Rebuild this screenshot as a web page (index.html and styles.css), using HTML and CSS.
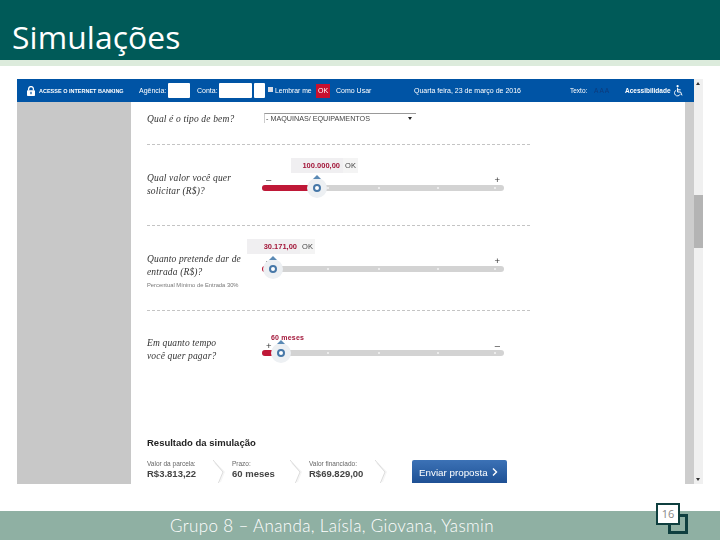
FILE: index.html
```html
<!DOCTYPE html>
<html lang="pt">
<head>
<meta charset="utf-8">
<title>Simulações</title>
<link rel="stylesheet" href="styles.css">
</head>
<body>
<div class="slide">
  <header class="title-bar"><h1>Simulações</h1></header>
  <div class="strip"></div>
  <main class="stage">
    <div class="shot">
      <nav class="nav">
        <svg class="lock" width="8" height="10" viewBox="0 0 8 10"><path d="M1.6 4.5V3a2.4 2.4 0 0 1 4.8 0v1.5" fill="none" stroke="#fff" stroke-width="1.3"/><rect y="4.2" width="8" height="5.8" rx=".8" fill="#fff"/><rect x="3.4" y="5.8" width="1.2" height="2.4" fill="#0054a5"/></svg>
        <span class="nav-access">ACESSE O INTERNET BANKING</span>
        <span class="nav-agencia">Agência:</span>
        <span class="field f-ag"></span>
        <span class="nav-conta">Conta:</span>
        <span class="field f-co"></span>
        <span class="field f-di"></span>
        <span class="check"></span>
        <span class="nav-lembrar">Lembrar me</span>
        <span class="ok-btn">OK</span>
        <span class="nav-como">Como Usar</span>
        <span class="nav-date">Quarta feira, 23 de março de 2016</span>
        <span class="nav-texto">Texto:</span>
        <span class="nav-aaa">A A A</span>
        <span class="nav-acess">Acessibilidade</span>
        <svg class="wheel" width="9" height="12" viewBox="0 0 9 12"><circle cx="3.6" cy="1.2" r="1.1" fill="#fff"/><path d="M3.6 2.8V7h3l1.4 3.4M3.6 4.8h3" fill="none" stroke="#fff" stroke-width="1"/><path d="M2.2 5.2a3 3 0 1 0 4 4" fill="none" stroke="#fff" stroke-width=".9"/></svg>
      </nav>
      <div class="shot-body">
        <aside class="side"></aside>
        <section class="content">
          <div class="row row-type">
            <p class="q q-type">Qual é o tipo de bem?</p>
            <div class="select"><span>- MAQUINAS/ EQUIPAMENTOS</span><i class="caret"></i></div>
          </div>
          <div class="row row-value">
            <p class="q">Qual valor você quer<br>solicitar (R$)?</p>
            <div class="control">
              <div class="amount a-value"><span class="amount-box box-value">100.000,00</span><span class="amount-ok">OK</span></div>
              <div class="signs"><span>–</span><span>+</span></div>
              <div class="track">
                <i class="fill fill-value"></i>
                <i class="tick t1"></i><i class="tick t2"></i><i class="tick t3"></i><i class="tick t4"></i>
                <span class="handle h-value"></span>
              </div>
            </div>
          </div>
          <div class="row row-entry">
            <div>
              <p class="q">Quanto pretende dar de<br>entrada (R$)?</p>
              <p class="note">Percentual Mínimo de Entrada 30%</p>
            </div>
            <div class="control">
              <div class="amount a-entry"><span class="amount-box box-entry">30.171,00</span><span class="amount-ok">OK</span></div>
              <div class="signs"><span>–</span><span>+</span></div>
              <div class="track">
                <i class="fill fill-entry"></i>
                <i class="tick t1"></i><i class="tick t2"></i><i class="tick t3"></i><i class="tick t4"></i>
                <span class="handle h-entry"></span>
              </div>
            </div>
          </div>
          <div class="row row-time">
            <p class="q">Em quanto tempo<br>você quer pagar?</p>
            <div class="control">
              <div class="months">60 meses</div>
              <div class="signs signs-time"><span>+</span><span>–</span></div>
              <div class="track">
                <i class="fill fill-time"></i>
                <i class="tick t1"></i><i class="tick t2"></i><i class="tick t3"></i><i class="tick t4"></i>
                <span class="handle h-time"></span>
              </div>
            </div>
          </div>
          <div class="result">
            <h2>Resultado da simulação</h2>
            <div class="result-row">
              <div class="stat s1"><small>Valor da parcela:</small><b>R$3.813,22</b></div>
              <svg class="chev" width="18" height="24" viewBox="0 0 18 24"><path d="M2 3l9 9-4 10" fill="none" stroke="#f6f6f6" stroke-width="2"/><path d="M0 0l10 12-5 12" fill="none" stroke="#dcdcdc"/></svg>
              <div class="stat s2"><small>Prazo:</small><b>60 meses</b></div>
              <svg class="chev" width="18" height="24" viewBox="0 0 18 24"><path d="M2 3l9 9-4 10" fill="none" stroke="#f6f6f6" stroke-width="2"/><path d="M0 0l10 12-5 12" fill="none" stroke="#dcdcdc"/></svg>
              <div class="stat s3"><small>Valor financiado:</small><b>R$69.829,00</b></div>
              <svg class="chev" width="18" height="24" viewBox="0 0 18 24"><path d="M2 3l9 9-4 10" fill="none" stroke="#f6f6f6" stroke-width="2"/><path d="M0 0l10 12-5 12" fill="none" stroke="#dcdcdc"/></svg>
              <div class="send">Enviar proposta<svg width="6" height="8" viewBox="0 0 6 8"><path d="M1 .5 4.5 4 1 7.5" fill="none" stroke="#fff" stroke-width="1.4"/></svg></div>
            </div>
          </div>
        </section>
        <div class="gutter"></div>
      </div>
    </div>
    <div class="scrollbar">
      <i class="arrow-up"></i>
      <i class="thumb"></i>
      <i class="arrow-down"></i>
    </div>
  </main>
  <footer class="footer">
    <span class="names">Grupo 8 – Ananda, Laísla, Giovana, Yasmin</span>
    <span class="page-back"></span>
    <span class="page-num">16</span>
  </footer>
</div>
</body>
</html>
```
FILE: styles.css
```css
*, *::before, *::after { box-sizing: border-box; }
html, body { margin: 0; padding: 0; background: #fff; }
p, h1, h2 { margin: 0; font-weight: normal; }
i { display: block; font-style: normal; }

.slide { width: 720px; height: 540px; display: flex; flex-direction: column; overflow: hidden; font-family: "Liberation Sans", Arial, sans-serif; }

.title-bar { height: 60px; background: #005a58; padding: 15px 0 0 12px; flex: none; }
.title-bar h1 { font: 31.8px/44px "Open Sans", sans-serif; color: #fff; letter-spacing: .1px; height: 45px; }
.strip { height: 6px; background: #dcebdc; flex: none; }

.stage { height: 405px; margin-top: 13px; padding-left: 17px; display: flex; flex: none; }
.shot { width: 677px; height: 405px; display: flex; flex-direction: column; overflow: hidden; filter: blur(.35px); }

.nav { height: 23px; flex: none; background: #0054a5; color: #fff; display: flex; align-items: center; font-size: 7px; padding-left: 10px; white-space: nowrap; }
.lock { margin-right: 4px; flex: none; }
.nav-access { font-size: 5.5px; font-weight: bold; width: 100px; }
.nav-agencia { width: 29px; }
.field { height: 15px; background: #fff; border-radius: 1px; display: block; flex: none; }
.f-ag { width: 22px; margin-right: 7px; }
.nav-conta { width: 22px; }
.f-co { width: 33px; margin-right: 2px; }
.f-di { width: 11px; margin-right: 3px; }
.check { width: 5px; height: 5px; background: #d8dce6; margin: 0 2px 2px 0; }
.nav-lembrar { width: 41px; font-size: 6.8px; }
.ok-btn { width: 14px; height: 14px; background: #c8102e; font-size: 7px; text-align: center; line-height: 13px; margin-right: 6px; }
.nav-como { width: 78px; }
.nav-date { width: 156px; font-size: 7px; }
.nav-texto { width: 24px; font-size: 6.5px; }
.nav-aaa { width: 31px; color: #0d3a7a; font-size: 6.5px; }
.nav-acess { width: 49px; font-size: 6.5px; font-weight: bold; }

.shot-body { display: flex; flex: 1; min-height: 0; background: #fff; }
.side { width: 114px; background: #c8c8c8; flex: none; }
.gutter { width: 9px; background: #cdcdcd; flex: none; }
.content { flex: 1; padding-left: 16px; display: flex; flex-direction: column; min-width: 0; }

.row { width: 383px; display: grid; grid-template-columns: 115px 1fr; border-bottom: 1px dashed #c4c4c4; flex: none; }
.row-type { height: 43px; padding-top: 9px; }
.row-value { height: 81px; padding-top: 13px; }
.row-entry { height: 85px; padding-top: 13px; }
.row-time { height: 126px; border: 0; padding-top: 22px; }

.q { font: italic 9.5px/13px "Liberation Serif", serif; color: #333; white-space: nowrap; letter-spacing: .15px; }
.row-value .q { margin-top: 14px; }
.row-entry .q { margin-top: 14px; }
.row-time .q { margin-top: 4px; }
.q-type { margin-top: 2px; }
.note { font-size: 5.8px; line-height: 8px; color: #777; margin-top: 2px; white-space: nowrap; }

.select { width: 152px; height: 10px; border-top: 1px solid #999; border-left: 1px solid #ccc; margin: 2px 0 0 2px; font-size: 7.2px; line-height: 9px; color: #444; display: flex; justify-content: space-between; align-items: center; padding: 0 2px 0 1px; white-space: nowrap; }
.caret { width: 0; height: 0; border: 2px solid transparent; border-top: 3px solid #222; border-bottom: 0; margin-right: 2px; }

.control { width: 242px; }
.amount { display: flex; height: 15px; width: max-content; font-size: 7.5px; font-weight: bold; line-height: 15px; }
.a-value { margin-left: 29px; }
.a-entry { margin-left: -15px; }
.amount-box { background: #f0eff1; color: #a3173a; text-align: right; padding-right: 3px; display: block; }
.box-value { width: 52px; }
.box-entry { width: 53px; }
.amount-ok { width: 15px; background: #f4f4f4; color: #444; font-weight: normal; text-align: center; }

.signs { display: flex; justify-content: space-between; height: 8px; margin-top: 3px; padding: 0 4px; font-size: 9.5px; line-height: 8px; color: #333; }
.signs-time { margin-top: 0; }
.months { height: 9px; margin-left: 9px; font-size: 7px; line-height: 9px; font-weight: bold; color: #a3173a; letter-spacing: .2px; }

.track { position: relative; height: 6px; border-radius: 3px; background: #d3d3d3; }
.row-value .track, .row-entry .track { margin-top: 1px; }
.fill { position: absolute; left: 0; top: 0; height: 6px; background: #bf1837; border-radius: 3px 0 0 3px; }
.fill-value { width: 48px; }
.fill-entry { width: 6px; }
.fill-time { width: 11px; }
.tick { position: absolute; top: 2px; width: 2px; height: 2px; background: #f4f4f4; border-radius: 50%; }
.t1 { left: 65px; }
.t2 { left: 116px; }
.t3 { left: 175px; }
.t4 { left: 232px; }

.handle { position: absolute; top: -7px; width: 20px; height: 20px; margin-left: -10px; border-radius: 50%; background: #edf0f3; }
.handle::before { content: ""; position: absolute; left: 6px; top: 6px; width: 8px; height: 8px; border: 2px solid #4778a8; border-radius: 50%; background: #fff; }
.handle::after { content: ""; position: absolute; left: 6px; top: -3px; width: 8px; height: 4px; border: 4px solid transparent; border-bottom: 4px solid #5b8ab5; border-top: 0; }
.h-value { left: 55px; }
.h-entry { left: 11px; }
.h-time { left: 19px; }

.result h2 { font-size: 9.5px; line-height: 11px; font-weight: bold; color: #222; }
.result-row { display: flex; margin-top: 12px; height: 23px; overflow: hidden; }
.stat { flex: none; color: #444; }
.stat small { display: block; font-size: 6.5px; line-height: 8px; color: #666; white-space: nowrap; }
.stat b { display: block; font-size: 9.5px; line-height: 12px; font-weight: bold; white-space: nowrap; }
.s1 { width: 66px; }
.s2 { width: 58px; }
.s3 { width: 62px; }
.chev { flex: none; margin-right: 1px; }
.s3 + .chev { margin-left: 4px; margin-right: 0; }
.send { width: 95px; height: 24px; margin-left: 19px; flex: none; background: linear-gradient(#3c72b6, #1d4f93); border-radius: 2px 2px 0 0; color: #fff; font-size: 9.8px; line-height: 23px; padding-left: 7px; display: flex; align-items: center; gap: 4px; white-space: nowrap; }

.scrollbar { width: 9px; height: 405px; background: #f0f0f0; position: relative; flex: none; }
.thumb { position: absolute; left: 0; top: 116px; width: 9px; height: 53px; background: #b4b4b4; }
.arrow-up, .arrow-down { position: absolute; left: 2px; width: 0; height: 0; border: 2px solid transparent; }
.arrow-up { top: 3px; border-bottom: 3px solid #333; border-top: 0; }
.arrow-down { bottom: 3px; border-top: 3px solid #333; border-bottom: 0; }

.footer { position: relative; margin-top: 27px; height: 29px; background: #8fb0a3; color: #fff; padding-left: 170px; font: 300 17px/29px Lato, sans-serif; white-space: nowrap; flex: none; }
.names { letter-spacing: .35px; }
.page-back { position: absolute; left: 668px; top: 3px; width: 20px; height: 20px; border: 3px solid #0f3f3f; }
.page-num { position: absolute; left: 656px; top: -8px; width: 24px; height: 22px; border: 2px solid #0f3f3f; background: #fff; color: #888; font: 11px/18px "Open Sans", sans-serif; text-align: center; }
```
